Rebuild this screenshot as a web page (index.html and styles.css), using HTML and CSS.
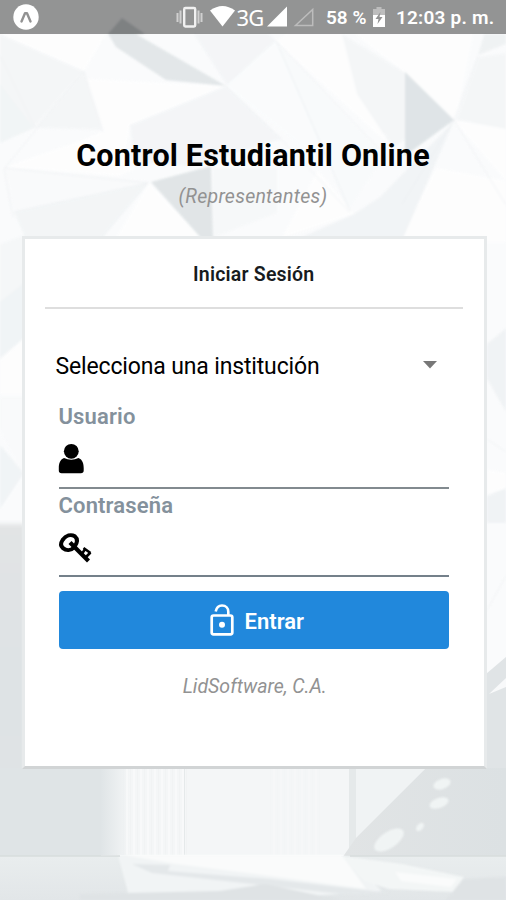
FILE: index.html
```html
<!DOCTYPE html>
<html lang="es">
<head>
<meta charset="utf-8">
<title>Control Estudiantil Online</title>
<link rel="stylesheet" href="styles.css">
</head>
<body>
<svg class="backdrop" viewBox="0 0 506 900" preserveAspectRatio="none" aria-hidden="true">
  <defs>
    <linearGradient id="left" x1="0" y1="0" x2="0" y2="1"><stop offset="0" stop-color="#e2e4e5"/><stop offset=".45" stop-color="#dee3e5"/><stop offset="1" stop-color="#e0e4e5"/></linearGradient>
    <linearGradient id="floor" x1="0" y1="0" x2="0" y2="1"><stop offset="0" stop-color="#e9edee"/><stop offset="1" stop-color="#e2e6e8"/></linearGradient>
    <linearGradient id="fade" x1="0" y1="0" x2="1" y2="0"><stop offset="0" stop-color="#dfe4e6"/><stop offset="1" stop-color="#f4f6f7"/></linearGradient>
    <linearGradient id="shade" x1="0" y1="0" x2="1" y2="0"><stop offset="0" stop-color="#e1e4e5"/><stop offset="1" stop-color="#dce1e3"/></linearGradient>
    <pattern id="slats" width="7" height="10" patternUnits="userSpaceOnUse"><path d="M1 0v10" stroke="#fff" stroke-width="1.2"/><path d="M4.5 0v10" stroke="#eceff0" stroke-width=".7"/></pattern>
    <filter id="soft" color-interpolation-filters="sRGB"><feGaussianBlur stdDeviation=".8"/></filter>
    <filter id="softer" color-interpolation-filters="sRGB"><feGaussianBlur stdDeviation="2"/></filter>
  </defs>
  <rect width="506" height="900" fill="#fafbfc"/>
  <g filter="url(#soft)" opacity=".85">
    <path fill="#f4f6f7" d="M0 34 84 71 34 128 0 142zM84 71 103 130 35 128z"/>
    <path fill="#f0f4f5" d="M0 84 34 128 0 143z"/>
    <path fill="#fefefe" d="M0 34H106L84 71zM86 79l140 7-96 39-8 43-90-5 71-32z"/>
    <path fill="#dfe4e6" d="M108 34h28l90 52-60-6-50-33z"/>
    <path fill="#d0d6d8" d="M108 34 122 18 145 34z"/>
    <path fill="#f3f5f7" d="M194 34h75l7 7-49 45zM130 125l96-39 56 53-92 27-56-4z"/>
    <path fill="#fefefe" d="M276 41 286 34h58l44 110z"/>
    <path fill="#fafcfd" d="M226 86 276 41 350 185z"/>
    <path fill="#f4f6f7" d="M342 34 405 72v68l-12 8-36-54z"/>
    <path fill="#f8fafb" d="M276 41l108 115-36 55z"/>
    <path fill="#fefefe" d="M355 34h118l-16 80-5 6-47-47zM454 121l52 60-70-13-38 74h108V125z"/>
    <path fill="#dbe1e4" d="M405 72 454 120 405 156z"/>
    <path fill="#f4f6f7" d="m478 57 28-4v76l-50-9z"/>
    <path fill="#eef1f2" d="m478 55 6-21h22v10z"/>
    <path fill="#f0f3f5" d="m454 121-74 76-26 17-54 24h103z"/>
    <path fill="#f9fafb" d="M5 168 148 182 14 212z"/>
    <path fill="#fefefe" d="M5 167 100 134l35 35-15 7zM149 183 202 238H116z"/>
    <path fill="#f2f5f6" d="m14 212 134-29-46 55H25z"/>
    <path fill="#dde2e4" d="m151 182 60-16 2 72h-12z"/>
    <path fill="#fefefe" d="M318 170 354 214 282 238z"/>
    <path fill="#f6f8f9" d="M213 168h64v45l-64 25z"/>
    <path fill="#f5f7f8" d="M0 244l24-9v103L0 360z"/>
    <path fill="#eff3f5" d="M0 302l24-19v56L0 357zM0 445l24 28-24 36z"/>
    <path fill="#fefefe" d="M0 360 24 338v56H0z"/>
    <path fill="#f9fafb" d="M0 397h24v79L0 430z"/>
    <path fill="#eff2f4" d="m487 344 19-16v84l-19-33zM487 496l19-8v35h-19z"/>
    <path fill="#fefefe" d="m487 470 19 3v15l-19 6z"/>
    <g stroke="#eaedef" fill="none" stroke-width=".7"><path d="m0 55 35 73M84 71l-80 98 9 48M84 71l19 61M5 168l143 15-46 54M226 86l55 53 69 73M276 41l112 117M276 41l74 170M454 120l52 85M478 56l-24 64-52 84M148 183 14 212M487 439l19 13M487 610l19-34"/></g>
  </g>
  <rect x="-5" y="524" width="30" height="328" fill="url(#left)" filter="url(#softer)"/>
  <path fill="#e0e4e6" d="m486 674 20-17v195h-20z"/>
  <path fill="#f8f9fa" d="m489 694 17-16v9z"/>
  <rect y="768" width="101" height="90" fill="#dfe4e6"/>
  <rect x="123" y="768" width="230" height="87" fill="#f4f6f7"/>
  <rect x="100" y="768" width="30" height="87" fill="url(#fade)"/>
  <rect x="123" y="768" width="65" height="87" fill="url(#slats)" opacity=".6"/>
  <rect x="270" y="768" width="50" height="87" fill="url(#slats)" opacity=".25"/>
  <path fill="#e5e9ea" d="M184 768h1v87h-1zM349 768h7v87h-7z"/>
  <path fill="#f0f3f4" d="M356 768h70l-70 71z"/>
  <path fill="url(#shade)" d="M426 768h80v90H342l14-20z"/>
  <g fill="#f0f4f4" filter="url(#soft)"><ellipse cx="442" cy="784" rx="9" ry="5" transform="rotate(-20 442 784)"/><ellipse cx="439" cy="803" rx="10" ry="5" transform="rotate(-20 439 803)"/><ellipse cx="420" cy="827" rx="5" ry="3" transform="rotate(-50 420 827)"/><ellipse cx="389" cy="840" rx="17" ry="8" transform="rotate(-34 389 840)"/></g>
  <rect y="856" width="506" height="44" fill="url(#floor)"/>
  <g filter="url(#soft)">
    <path fill="#f1f4f5" d="M118 855h224l40 36-130 9H130z"/>
    <path fill="#fafbfb" d="M124 855h218l24 34-96-13-94-12z"/>
    <path fill="#e4e8ea" d="m132 864 38 1-2 6 102 8 120 14-40 2-80-9-118-13z"/>
    <path fill="#f3f6f6" d="m342 856 60 8 62 13-10 15-65-3-25-8z"/>
    <path fill="#fafbfb" d="m395 872 62 7-6 8-50-6z"/>
    <path fill="#dfe3e5" d="m463 879 43-2v23h-60zM80 894l140-3 45-7 75 16H80z"/>
  </g>
  <path d="M0 856h120M350 856h156" stroke="#d8dddd" stroke-width="1.500"/>
</svg>

<header class="status">
  <svg class="expo" width="26" height="26" viewBox="0 0 26 26"><circle cx="13" cy="13" r="12.7" fill="#fff"/><path d="M8.5 17.5 12 9.2h2l3.5 8.3" fill="none" stroke="#929292" stroke-width="2.4" stroke-linejoin="round" stroke-linecap="round"/></svg>
  <svg class="indicators" width="140" height="34" viewBox="176 0 140 34">
    <path d="M177.500 13v9M180.500 10.500v13M198.500 10.500v13M201.500 13v9" stroke="#d0d0d0" stroke-width="2"/>
    <rect x="184.200" y="8" width="11" height="18.500" rx="1.200" fill="none" stroke="#f1f1f1" stroke-width="2.400"/>
    <path d="M210 10.500Q222.500 1.500 235 10.500L222.500 26.500z" fill="#fff"/>
    <path d="M287 6.500V26.500H267z" fill="#fff"/>
    <path d="M312.700 9.500V25.500H295.500z" fill="none" stroke="#bcbcbc" stroke-width="1.500"/>
    <text class="network" x="236.500" y="26">3G</text>
  </svg>
  <span class="percent">58 %</span>
  <svg class="battery" width="12" height="20" viewBox="0 0 12 20"><path fill="#bdbdbd" d="M3.500 0h5v2H12v7H0V2h3.500z"/><path fill="#fff" d="M0 8h12v12H0z"/><path fill="#929292" d="M7.500 5 2.500 12h3l-1 5 5-7h-3z"/></svg>
  <span class="clock">12:03 p. m.</span>
</header>

<main>
  <h1>Control Estudiantil Online</h1>
  <p class="audience">(Representantes)</p>
  <section class="card">
    <h2>Iniciar Sesión</h2>
    <div class="select"><span>Selecciona una institución</span><svg width="14" height="8" viewBox="0 0 14 8"><path d="M0 0h14L7 7.500z" fill="#777"/></svg></div>
    <label class="field">
      <span class="label">Usuario</span>
      <svg class="icon" width="34" height="34" viewBox="0 0 34 34"><circle cx="12.300" cy="8.300" r="7.400"/><path d="M5 15Q12.300 18.500 19.500 15C23.500 16.500 24.700 20.500 24.700 25v2.500c0 1.800-1 2.800-2.800 2.800H2.600C.8 30.300-.2 29.300-.2 27.500V25C-.2 20.500 1 16.500 5 15z"/></svg>
    </label>
    <label class="field second">
      <span class="label">Contraseña</span>
      <svg class="icon" width="34" height="34" viewBox="0 0 34 34"><g fill="none" stroke="#000"><path d="M3.600 8C7 3.200 12 2 15.800 4.300c3.500 3 2 7.500-.6 11-3.300 3.300-8 3.500-11.200.8C1.200 13.800 1.700 10.800 3.600 8z" stroke-width="4"/><path d="m11 10.500 18.500 18.500" stroke-width="4.200"/><path d="m22.500 22.500 4-6M26.500 25.500l5-5M24.500 16l7 5" stroke-width="2.600"/></g></svg>
    </label>
    <button type="button"><svg width="24" height="32" viewBox="0 0 24 32"><rect x="1.700" y="11.500" width="20.600" height="18.800" rx="1.800" fill="none" stroke="#fff" stroke-width="2.700"/><path d="M5.700 7.500C6.500 3.500 9 1.500 12 1.500c4 0 6.300 2.800 6.300 6.300v3.500" fill="none" stroke="#fff" stroke-width="2.600"/><circle cx="12" cy="20.800" r="3" fill="#fff"/></svg><span>Entrar</span></button>
    <p class="company">LidSoftware, C.A.</p>
  </section>
</main>
</body>
</html>
```

FILE: styles.css
```css
* { box-sizing: border-box; }
body {
  margin: 0;
  height: 900px;
  overflow: hidden;
  position: relative;
  isolation: isolate;
  font-family: Roboto, "Liberation Sans", sans-serif;
  color: #000;
}
svg { display: block; flex-shrink: 0; }
h1, h2, p { margin: 0; }
.backdrop { position: absolute; inset: 0; width: 506px; height: 900px; z-index: -1; }
.status {
  height: 34px;
  display: flex;
  align-items: center;
  padding-left: 13px;
  background: rgba(0, 0, 0, .41);
  color: #fff;
  font-size: 19px;
  font-weight: 600;
  white-space: nowrap;
}
.indicators { margin-left: 137px; }
.network { font: 400 22px "Noto Sans", sans-serif; letter-spacing: -.8px; fill: #fff; }
.percent { width: 47px; margin-left: 10px; padding-top: 1px; }
.battery { margin-top: -1px; }
.clock { margin-left: 11px; padding-top: 1px; letter-spacing: .2px; }
main { display: flex; flex-direction: column; align-items: center; }
h1 { margin-top: 103px; height: 36px; line-height: 37px; font-size: 30.5px; letter-spacing: .18px; font-weight: 700; white-space: nowrap; }
.audience, .company { font-size: 19.5px; line-height: 24px; font-style: italic; color: #929292; text-align: center; }
.audience { margin-top: 12px; letter-spacing: .25px; }
.card {
  width: 465px;
  height: 533px;
  margin-top: 27px;
  margin-left: 3px;
  padding: 0 35px 0 33.500px;
  background: #fff;
  border: 3px solid #e7eaeb;
  border-bottom-color: #d1d4d5;
}
h2 {
  height: 70px;
  margin: 0 -14px 0 -14px;
  padding-top: 24px;
  border-bottom: 2px solid #dedede;
  font-size: 19.5px;
  letter-spacing: .2px;
  line-height: 24px;
  font-weight: 600;
  text-align: center;
  color: #171b20;
}
.select {
  height: 84px;
  margin-left: -3px;
  padding: 44px 12px 0 0;
  display: flex;
  justify-content: space-between;
  align-items: flex-start;
  font-size: 23px;
  line-height: 28px;
  letter-spacing: -.15px;
}
.select svg { margin-top: 8px; }
.field { display: flex; flex-direction: column; height: 96px; padding-top: 10px; border-bottom: 2px solid #828a8f; }
.second { height: 88px; padding-top: 3px; border-color: #74808a; }
.label { font-size: 22px; line-height: 28px; font-weight: 600; letter-spacing: .15px; color: #84919c; }
.icon { margin-top: 12px; overflow: visible; }
button {
  width: 100%;
  height: 58px;
  margin-top: 14px;
  padding: 0 0 1px 6px;
  display: flex;
  align-items: center;
  justify-content: center;
  gap: 11px;
  border: 0;
  border-radius: 4px;
  background: #2188dc;
  color: #fff;
  font: 600 22px Roboto, sans-serif;
}
button span { padding-top: 3px; }
.company { margin-top: 26px; margin-left: 2px; }
```
